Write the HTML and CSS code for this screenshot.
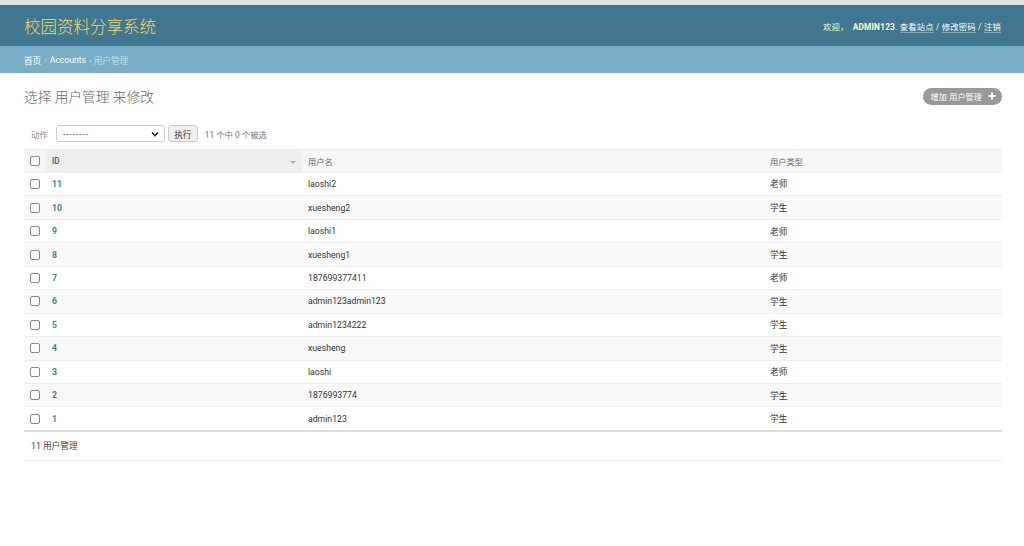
FILE: index.html
```html
<!DOCTYPE html>
<html lang="zh">
<head>
<meta charset="utf-8">
<title>选择 用户管理 来修改</title>
<link rel="stylesheet" href="styles.css">
</head>
<body>
<div class="topline"></div>
<header class="header">
  <div class="site-name">校园资料分享系统</div>
  <div class="user-tools">欢迎， <strong>ADMIN123</strong>. <a href="#">查看站点</a> / <a href="#">修改密码</a> / <a href="#">注销</a></div>
</header>
<nav class="breadcrumbs"><a href="#">首页</a> › <a href="#">Accounts</a> › 用户管理</nav>
<main class="content">
  <div class="title-row">
    <h1 class="page-title">选择 用户管理 来修改</h1>
    <a class="addlink" href="#">增加 用户管理 <svg width="8" height="8" viewBox="0 0 8 8"><path d="M4 0.5v7M0.5 4h7" stroke="#fff" stroke-width="2"/></svg></a>
  </div>
  <div class="actions">
    <span class="act-label">动作</span>
    <div class="select"><span class="dashes">--------</span><svg width="8" height="6" viewBox="0 0 8 6"><path d="M1 1.5l3 3 3-3" stroke="#222" stroke-width="1.6" fill="none"/></svg></div>
    <button class="go">执行</button>
    <span class="counter">11 个中 0 个被选</span>
  </div>
  <table class="results">
    <thead>
      <tr>
        <th class="col-check"><span class="cb"></span></th>
        <th class="col-id sorted">ID<span class="sort-arrow"></span></th>
        <th class="col-name">用户名</th>
        <th class="col-type">用户类型</th>
      </tr>
    </thead>
    <tbody>
      <tr><td class="col-check"><span class="cb"></span></td><td class="idcell"><a href="#">11</a></td><td>laoshi2</td><td>老师</td></tr>
      <tr><td class="col-check"><span class="cb"></span></td><td class="idcell"><a href="#">10</a></td><td>xuesheng2</td><td>学生</td></tr>
      <tr><td class="col-check"><span class="cb"></span></td><td class="idcell"><a href="#">9</a></td><td>laoshi1</td><td>老师</td></tr>
      <tr><td class="col-check"><span class="cb"></span></td><td class="idcell"><a href="#">8</a></td><td>xuesheng1</td><td>学生</td></tr>
      <tr><td class="col-check"><span class="cb"></span></td><td class="idcell"><a href="#">7</a></td><td>187699377411</td><td>老师</td></tr>
      <tr><td class="col-check"><span class="cb"></span></td><td class="idcell"><a href="#">6</a></td><td>admin123admin123</td><td>学生</td></tr>
      <tr><td class="col-check"><span class="cb"></span></td><td class="idcell"><a href="#">5</a></td><td>admin1234222</td><td>学生</td></tr>
      <tr><td class="col-check"><span class="cb"></span></td><td class="idcell"><a href="#">4</a></td><td>xuesheng</td><td>学生</td></tr>
      <tr><td class="col-check"><span class="cb"></span></td><td class="idcell"><a href="#">3</a></td><td>laoshi</td><td>老师</td></tr>
      <tr><td class="col-check"><span class="cb"></span></td><td class="idcell"><a href="#">2</a></td><td>1876993774</td><td>学生</td></tr>
      <tr><td class="col-check"><span class="cb"></span></td><td class="idcell"><a href="#">1</a></td><td>admin123</td><td>学生</td></tr>
    </tbody>
  </table>
  <div class="paginator">11 用户管理</div>
</main>
</body>
</html>
```
FILE: styles.css
```css
* { box-sizing: border-box; }
html, body { margin: 0; padding: 0; background: #fff; }
body {
  font-family: Roboto, "Noto Sans CJK SC", "Liberation Sans", sans-serif;
  color: #333;
  font-size: 9px;
}
a { text-decoration: none; }

.topline { height: 5px; background: #e2e2e2; }

.header {
  height: 41px;
  background: #417690;
  display: flex;
  align-items: center;
  justify-content: space-between;
  padding: 0 23px 0 24px;
}
.site-name {
  color: #f5dd5d;
  font-size: 16.5px;
  font-weight: 300;
}
.user-tools {
  color: #ffc;
  font-size: 8.3px;
  letter-spacing: 0.2px;
}
.user-tools strong { font-weight: 700; margin-left: 2px; }
.user-tools a {
  color: #fff;
  border-bottom: 1px solid rgba(255,255,255,0.35);
}

.breadcrumbs {
  height: 27px;
  background: #79aec8;
  color: #c4dce8;
  font-size: 8.6px;
  padding: 0 24px;
  display: flex;
  align-items: center;
  gap: 3px;
}
.breadcrumbs a { color: #fff; }

.content { padding: 0 22px 0 24px; }

.title-row {
  display: flex;
  justify-content: space-between;
  align-items: center;
  height: 46px;
}
.page-title {
  margin: 0 0 1px;
  font-size: 13.7px;
  font-weight: 300;
  color: #666;
}
.addlink {
  display: flex;
  align-items: center;
  gap: 6px;
  height: 17px;
  padding: 0 6px 0 8px;
  background: #999;
  color: #fff;
  border-radius: 9px;
  font-size: 8px;
  letter-spacing: 0.2px;
}

.actions {
  display: flex;
  align-items: center;
  height: 17px;
  margin-top: 6px;
  padding-left: 7px;
  color: #666;
  font-size: 8.4px;
}
.act-label { margin-right: 8px; color: #888; }
.select {
  width: 109px;
  height: 17px;
  border: 1px solid #ccc;
  border-radius: 3px;
  display: flex;
  align-items: center;
  justify-content: space-between;
  padding: 0 5px 0 6px;
  color: #333;
  font-size: 8px;
}
.dashes { letter-spacing: 0.6px; font-family: "Liberation Sans", sans-serif; }
.go {
  margin-left: 3px;
  height: 17px;
  width: 30px;
  border: 1px solid #ccc;
  border-radius: 3px;
  background: #efefef;
  color: #333;
  font-family: inherit;
  font-size: 8.6px;
  padding: 0;
}
.counter { margin-left: 7px; color: #777; }

.results {
  width: 100%;
  border-collapse: collapse;
  margin-top: 7px;
}
.results th {
  height: 23px;
  background: #f6f6f6;
  color: #666;
  font-weight: 400;
  font-size: 8.2px;
  text-align: left;
  padding: 0 6px;
  border-top: 1px solid #eee;
  position: relative;
}
.results th.sorted { background: #eee; color: #555; font-weight: 500; }
.sort-arrow {
  position: absolute;
  right: 6px;
  top: 11px;
  border-left: 3px solid transparent;
  border-right: 3px solid transparent;
  border-top: 3px solid #aaa;
}
.col-check { width: 22px; }
.col-id { width: 256px; }
.col-name { width: 462px; }
.results td {
  height: 23.45px;
  padding: 0 6px;
  border-bottom: 1px solid #eee;
  color: #333;
  font-size: 8.7px;
}
.results tbody tr:nth-child(even) td { background: #f9f9f9; }
.results tbody tr:last-child td { border-bottom: 1px solid #ddd; }
.idcell a { color: #447e9b; font-weight: 700; }
.cb {
  display: block;
  width: 10px;
  height: 10px;
  border: 1px solid #888;
  border-radius: 2px;
  background: #fff;
}

.paginator {
  height: 30px;
  border-top: 1px solid #ddd;
  border-bottom: 1px solid #eee;
  display: flex;
  align-items: center;
  padding-left: 7px;
  font-size: 8.7px;
  color: #444;
}
```
